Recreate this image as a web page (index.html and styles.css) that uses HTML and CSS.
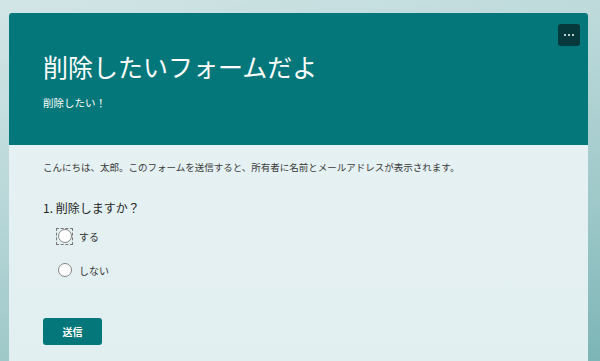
FILE: index.html
```html
<!DOCTYPE html>
<html lang="ja">
<head>
  <meta charset="UTF-8">
  <meta name="viewport" content="width=device-width, initial-scale=1.0">
  <title>削除したいフォームだよ</title>
  <link rel="stylesheet" href="styles.css">
</head>
<body>
  <div class="form-card">
    <header class="form-header">
      <button class="more-btn" aria-label="その他のオプション">
        <svg width="10" height="2" viewBox="0 0 10 2"><circle cx="1" cy="1" r="1" fill="#fff"/><circle cx="5" cy="1" r="1" fill="#fff"/><circle cx="9" cy="1" r="1" fill="#fff"/></svg>
      </button>
      <h1 class="form-title">削除したいフォームだよ</h1>
      <p class="form-subtitle">削除したい！</p>
    </header>

    <main class="form-body">
      <p class="notice">こんにちは、太郎。このフォームを送信すると、所有者に名前とメールアドレスが表示されます。</p>

      <section class="question">
        <div class="question-title">1. 削除しますか？</div>
        <label class="choice">
          <span class="radio-wrap focused"><span class="radio"></span></span>
          <span>する</span>
        </label>
        <label class="choice">
          <span class="radio-wrap"><span class="radio"></span></span>
          <span>しない</span>
        </label>
      </section>

      <button class="submit-btn">送信</button>
    </main>
  </div>
</body>
</html>
```

FILE: styles.css
```css
* {
  box-sizing: border-box;
}

html, body {
  height: 100%;
}

body {
  margin: 0;
  padding: 13px 12px 0 9px;
  overflow: hidden;
  font-family: "Noto Sans CJK JP", "Noto Sans", sans-serif;
  background: linear-gradient(165deg, #d2e5e6 0%, #bcd9da 35%, #9ec8c9 70%, #7cb5b6 100%);
}

.form-card {
  height: 100%;
  background: linear-gradient(180deg, #e7f2f3 0%, #e2eff0 100%);
  border-radius: 3px 3px 0 0;
  overflow: hidden;
}

.form-header {
  position: relative;
  height: 132px;
  padding: 36px 34px 0;
  background-color: #03777a;
  color: #fff;
}

.more-btn {
  position: absolute;
  top: 11px;
  right: 8px;
  width: 22px;
  height: 22px;
  padding: 0;
  border: none;
  border-radius: 3px;
  background-color: #05393b;
  display: flex;
  align-items: center;
  justify-content: center;
}

.form-title {
  margin: 0;
  font-size: 25px;
  line-height: 34px;
  font-weight: 400;
}

.form-subtitle {
  margin: 13px 0 0;
  font-size: 10.5px;
  line-height: 14px;
}

.form-body {
  padding: 15px 34px 0;
  color: #333;
}

.notice {
  margin: 0;
  font-size: 9.5px;
  line-height: 14px;
  color: #3a3a3a;
}

.question {
  margin-top: 26px;
}

.question-title {
  font-size: 12px;
  line-height: 16px;
  color: #252525;
}

.choice {
  display: flex;
  align-items: center;
  gap: 6px;
  height: 20px;
  margin: 10px 0 0 13px;
  font-size: 10px;
  color: #333;
}

.choice + .choice {
  margin-top: 14px;
}

.radio-wrap {
  width: 17px;
  height: 17px;
  display: flex;
  align-items: center;
  justify-content: center;
  border: 1px dashed transparent;
}

.radio-wrap.focused {
  border-color: #777;
}

.radio {
  width: 14px;
  height: 14px;
  border-radius: 50%;
  border: 1px solid #858585;
  background-color: #fff;
}

.submit-btn {
  margin-top: 38px;
  width: 59px;
  height: 27px;
  border: none;
  border-radius: 3px;
  background-color: #03777a;
  color: #fff;
  font-family: inherit;
  font-size: 10px;
  font-weight: 700;
}
```
